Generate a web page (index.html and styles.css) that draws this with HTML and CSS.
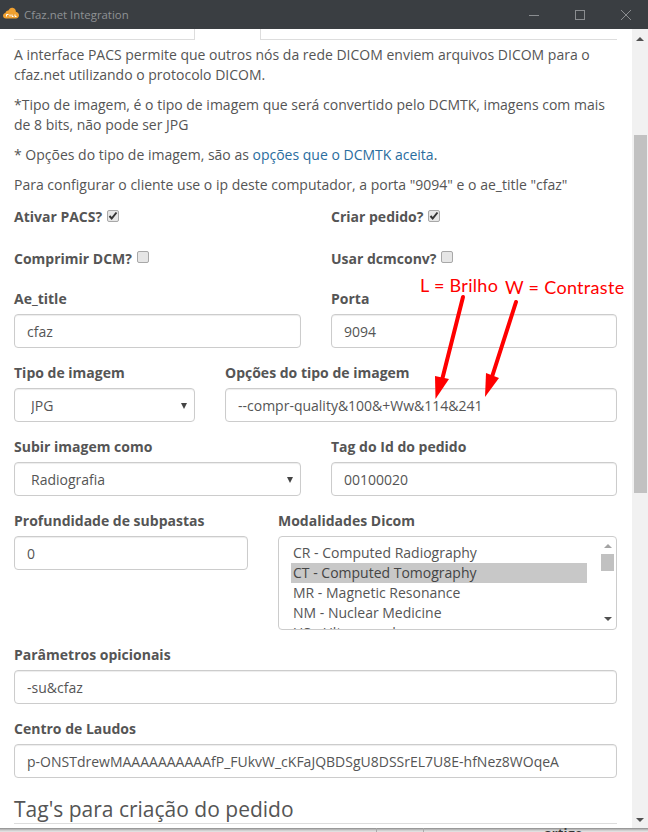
FILE: index.html
```html
<!DOCTYPE html>
<html lang="en">
<head>
    <meta charset="UTF-8">
    <title>Cfaz.net Integration</title>
    <link rel="stylesheet" href="styles.css">
</head>
<body>
    <div class="window">
        <div class="titlebar">
            <svg class="logo" width="16" height="12" viewBox="0 0 16 12">
                <path d="M3 11.500C1.200 11.500 0 10.300 0 8.800 0 7.400 1 6.300 2.400 6.100 2.700 4.400 4 3.400 5.400 3.600 6.200 1.600 7.800.5 9.600.8c2 .3 3.300 2 3.300 3.900 1.800.3 3.100 1.800 3.100 3.600 0 1.800-1.300 3.200-3 3.200z" fill="#f0a030"/>
                <path d="M3.500 9.500V7.500h2M7 9.500V7.500M9 7.500v2h1.500M12 7.500v2h1.500" stroke="#fff" stroke-width="1" fill="none"/>
            </svg>
            <span class="title">Cfaz.net Integration</span>
            <div class="win-buttons">
                <svg width="12" height="12" viewBox="0 0 12 12"><path d="M1 6.500h10" stroke="#8a8d90"/></svg>
                <svg width="12" height="12" viewBox="0 0 12 12"><rect x="1.500" y="1.500" width="9" height="9" fill="none" stroke="#8a8d90"/></svg>
                <svg width="12" height="12" viewBox="0 0 12 12"><path d="M1 1l10 10M11 1L1 11" stroke="#8a8d90"/></svg>
            </div>
        </div>

        <div class="body">
            <div class="content">
                <div class="tabs">
                    <div class="tab-line"></div>
                    <div class="tab-active"></div>
                    <div class="tab-line tab-rest"></div>
                </div>

                <p>A interface PACS permite que outros nós da rede DICOM enviem arquivos DICOM para o cfaz.net utilizando o protocolo DICOM.</p>
                <p>*Tipo de imagem, é o tipo de imagem que será convertido pelo DCMTK, imagens com mais de 8 bits, não pode ser JPG</p>
                <p>* Opções do tipo de imagem, são as <a href="#">opções que o DCMTK aceita</a>.</p>
                <p>Para configurar o cliente use o ip deste computador, a porta "9094" e o ae_title "cfaz"</p>

                <div class="row check-row">
                    <label class="col-half">Ativar PACS? <span class="check"><svg width="10" height="10" viewBox="0 0 10 10"><path d="M1.500 5l2.200 2.500L8.500 1.500" fill="none" stroke="#333" stroke-width="2"/></svg></span></label>
                    <label class="col-half">Criar pedido? <span class="check"><svg width="10" height="10" viewBox="0 0 10 10"><path d="M1.500 5l2.200 2.500L8.500 1.500" fill="none" stroke="#333" stroke-width="2"/></svg></span></label>
                </div>
                <div class="row check-row">
                    <label class="col-half">Comprimir DCM? <span class="check"></span></label>
                    <label class="col-half">Usar dcmconv? <span class="check"></span></label>
                </div>

                <div class="row field-row">
                    <div class="col-half">
                        <label>Ae_title</label>
                        <input class="control" type="text" value="cfaz">
                    </div>
                    <div class="col-half">
                        <label>Porta</label>
                        <input class="control" type="text" value="9094">
                    </div>
                </div>
                <div class="row field-row">
                    <div class="col-type">
                        <label>Tipo de imagem</label>
                        <div class="select-wrap"><select class="control"><option>JPG</option></select></div>
                    </div>
                    <div class="col-options">
                        <label>Opções do tipo de imagem</label>
                        <input class="control" type="text" value="--compr-quality&amp;100&amp;+Ww&amp;114&amp;241">
                    </div>
                </div>
                <div class="row field-row">
                    <div class="col-half">
                        <label>Subir imagem como</label>
                        <div class="select-wrap"><select class="control"><option>Radiografia</option></select></div>
                    </div>
                    <div class="col-half">
                        <label>Tag do Id do pedido</label>
                        <input class="control" type="text" value="00100020">
                    </div>
                </div>
                <div class="row field-row">
                    <div class="col-depth">
                        <label>Profundidade de subpastas</label>
                        <input class="control" type="text" value="0">
                    </div>
                    <div class="col-modal">
                        <label>Modalidades Dicom</label>
                        <div class="listbox">
                            <div class="options">
                                <div class="option">CR - Computed Radiography</div>
                                <div class="option selected">CT - Computed Tomography</div>
                                <div class="option">MR - Magnetic Resonance</div>
                                <div class="option">NM - Nuclear Medicine</div>
                                <div class="option">US - Ultrasound</div>
                            </div>
                            <div class="list-scroll">
                                <span class="arrow-up light"></span>
                                <span class="list-thumb"></span>
                                <span class="arrow-down"></span>
                            </div>
                        </div>
                    </div>
                </div>
                <div class="field">
                    <label>Parâmetros opicionais</label>
                    <input class="control" type="text" value="-su&amp;cfaz">
                </div>
                <div class="field">
                    <label>Centro de Laudos</label>
                    <input class="control" type="text" value="p-ONSTdrewMAAAAAAAAAAfP_FUkvW_cKFaJQBDSgU8DSSrEL7U8E-hfNez8WOqeA">
                </div>
                <h3>Tag's para criação do pedido</h3>
            </div>

            <div class="scrollbar">
                <span class="arrow-up"></span>
                <span class="thumb"></span>
                <span class="arrow-down"></span>
            </div>

            <div class="notes">
                <span class="note note-l">L = Brilho</span>
                <span class="note note-w">W = Contraste</span>
                <svg class="arrows" width="648" height="832" viewBox="0 0 648 832">
                    <path d="M463 297L442 380" stroke="#f00" stroke-width="4" stroke-linecap="round"/>
                    <path d="M435.500 399L435 376 449 379z" fill="#f00"/>
                    <path d="M516 302L491 380" stroke="#f00" stroke-width="4" stroke-linecap="round"/>
                    <path d="M485 397L486 373 499 378z" fill="#f00"/>
                </svg>
            </div>
        </div>
        <div class="under">
            <span class="under-cell"></span>
            <span class="under-word">artigo</span>
        </div>
    </div>
</body>
</html>
```

FILE: styles.css
```css
body {
    margin: 0;
    height: 832px;
    overflow: hidden;
    background: #fff;
    font-family: "Open Sans", sans-serif;
    font-size: 14px;
    line-height: 20px;
    color: #555;
}
.window {
    display: flex;
    flex-direction: column;
    height: 832px;
}
.titlebar {
    display: flex;
    align-items: center;
    height: 29px;
    flex: none;
    background: #3a3e42;
    padding: 0 0 0 3px;
}
.logo {
    margin: -3px 5px 0 0;
}
.title {
    font-size: 11.4px;
    color: #8f9295;
}
.win-buttons {
    margin-left: auto;
    display: flex;
    gap: 34px;
    padding-right: 16px;
}
.body {
    display: flex;
    flex: 1;
    min-height: 0;
    position: relative;
}
.content {
    flex: 1;
    min-width: 0;
    overflow: hidden;
    padding: 0 15px 0 14px;
}
.tabs {
    display: flex;
    height: 11px;
    margin-bottom: 5px;
}
.tab-line {
    width: 180px;
    border-bottom: 1px solid #ddd;
    border-right: 1px solid #ddd;
}
.tab-active {
    width: 65px;
}
.tab-rest {
    flex: 1;
    border-right: none;
    border-left: 1px solid #ddd;
}
p {
    margin: 0 0 10px;
}
a {
    color: #2a6d9e;
    text-decoration: none;
}
label {
    font-weight: 700;
    display: block;
}
.row {
    display: flex;
}
.check-row {
    margin-top: 12px;
    height: 30px;
}
.check-row + .field-row {
    margin-top: 10px;
}
.check {
    display: inline-flex;
    align-items: center;
    justify-content: center;
    box-sizing: border-box;
    width: 12px;
    height: 12px;
    margin-left: 1px;
    vertical-align: 1px;
    background: #e6e6e6;
    border: 1px solid #a8a8a8;
    border-radius: 2px;
}
.col-half {
    width: 287px;
    margin-right: 30px;
}
.col-half:last-child {
    margin-right: 0;
    width: 286px;
}
.field-row {
    margin-bottom: 15px;
}
.col-type {
    width: 181px;
    margin-right: 30px;
}
.col-options {
    flex: 1;
}
.col-depth {
    width: 234px;
    margin-right: 30px;
}
.col-modal {
    flex: 1;
}
.field {
    margin-bottom: 15px;
}
.control {
    display: block;
    box-sizing: border-box;
    width: 100%;
    height: 34px;
    margin-top: 5px;
    padding: 0 12px;
    font: 14px "Open Sans", sans-serif;
    color: #555;
    background: #fff;
    border: 1px solid #ccc;
    border-radius: 4px;
    box-shadow: inset 0 1px 1px rgba(0, 0, 0, 0.075);
}
select.control {
    appearance: none;
    padding-left: 16px;
}
.select-wrap {
    position: relative;
}
.select-wrap::after {
    content: "";
    position: absolute;
    right: 8px;
    top: 15px;
    border-left: 3px solid transparent;
    border-right: 3px solid transparent;
    border-top: 6px solid #444;
}
.listbox {
    display: flex;
    box-sizing: border-box;
    height: 94px;
    margin-top: 5px;
    border: 1px solid #ccc;
    border-radius: 4px;
    overflow: hidden;
}
.options {
    flex: 1;
    padding: 6px 12px 0;
    overflow: hidden;
}
.option {
    height: 20px;
    padding-left: 2px;
}
.selected {
    background: #c8c8c8;
    color: #444;
}
.list-scroll {
    width: 17px;
    flex: none;
    display: flex;
    flex-direction: column;
    align-items: center;
    padding: 7px 0 8px;
    box-sizing: border-box;
}
.list-thumb {
    width: 13px;
    height: 17px;
    margin-top: 6px;
    background: #c1c1c1;
}
.list-scroll .arrow-down {
    margin-top: auto;
}
.arrow-up,
.arrow-down {
    display: block;
    width: 0;
    height: 0;
    border-left: 4px solid transparent;
    border-right: 4px solid transparent;
}
.arrow-up {
    border-bottom: 4px solid #505050;
}
.arrow-up.light {
    border-bottom-color: #a3a3a3;
}
.arrow-down {
    border-top: 4px solid #505050;
}
h3 {
    margin: 0;
    padding-top: 3px;
    padding-bottom: 1px;
    font-size: 21px;
    line-height: 26px;
    font-weight: 400;
    border-bottom: 1px solid #ddd;
}
.scrollbar {
    width: 16px;
    flex: none;
    background: #f1f1f1;
    position: relative;
    display: flex;
    flex-direction: column;
    align-items: center;
    padding: 8px 0 6px;
    box-sizing: border-box;
}
.thumb {
    position: absolute;
    top: 106px;
    left: 2px;
    width: 13px;
    height: 358px;
    background: #c1c1c1;
}
.scrollbar .arrow-down {
    margin-top: auto;
}
.under {
    display: flex;
    height: 4px;
    flex: none;
    overflow: hidden;
    background: linear-gradient(#8a8a8a, #c8c8c8 50%, #e8e8e8);
    font-size: 13px;
    line-height: 4px;
}
.under-cell {
    width: 46px;
    height: 4px;
    margin-left: 376px;
    border-left: 1px solid #aaa;
    border-right: 1px solid #aaa;
}
.under-word {
    margin-left: 120px;
    padding-top: 3px;
    font-weight: 700;
    color: #333;
}
.notes {
    position: absolute;
    left: 0;
    top: -29px;
    width: 648px;
    height: 832px;
    pointer-events: none;
}
.arrows {
    position: absolute;
    left: 0;
    top: 0;
}
.note {
    position: absolute;
    font-family: Lato, sans-serif;
    font-size: 18px;
    letter-spacing: 0.3px;
    color: #f00;
}
.note-l {
    left: 420px;
    top: 275px;
}
.note-w {
    left: 505px;
    top: 277px;
}
```
